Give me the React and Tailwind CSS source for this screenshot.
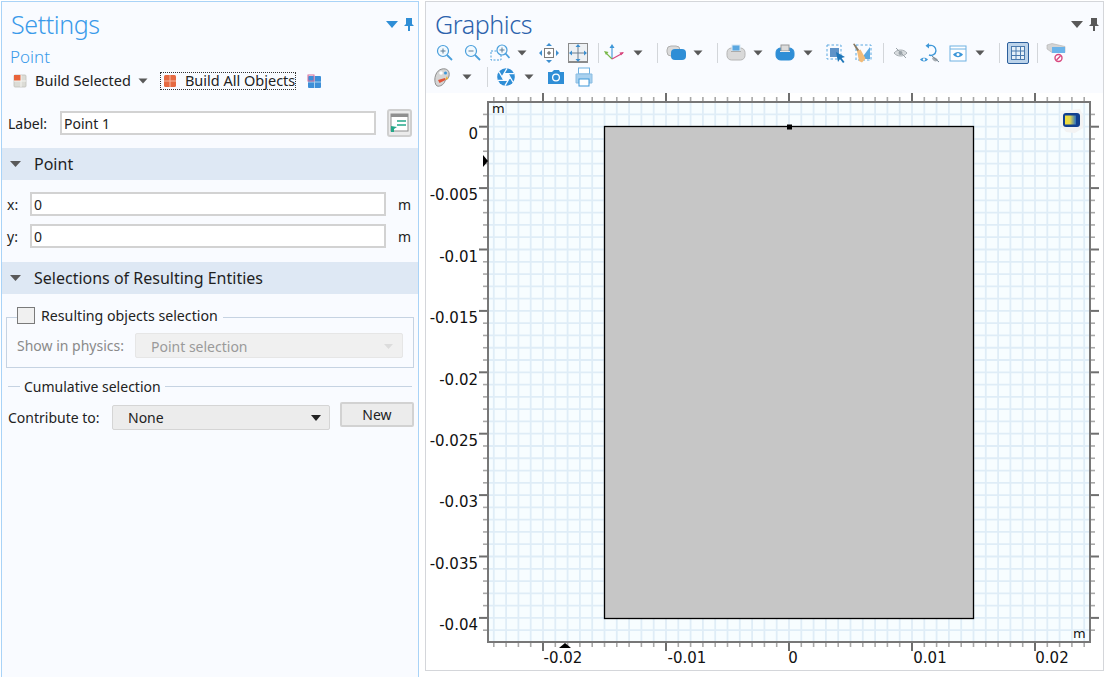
import React from 'react';

const major = 123;
const minor = 12.3;
const yMinor = 12.28;

function Caret({ className = '' }) {
  return (
    <svg width="12" height="8" viewBox="0 0 12 8" className={`shrink-0 ${className}`}>
      <path d="M1.500 1.500h9L6 6.500z" fill="#595959" />
    </svg>
  );
}

function Sep({ className = '' }) {
  return <div className={`w-px h-[20px] bg-[#d3d6da] shrink-0 ${className}`} />;
}

function Ico({ children, className = '' }) {
  return (
    <svg width="20" height="20" viewBox="0 0 20 20" fill="none" className={`shrink-0 ${className}`}>
      {children}
    </svg>
  );
}

function ZoomIcon({ plus = false }) {
  return (
    <>
      <circle cx="8" cy="8" r="5.5" stroke="#4a9fdc" strokeWidth="1.2" fill="#f2f9fe" />
      <path d="M12 12l5 5" stroke="#4a9fdc" strokeWidth="1.800" />
      <path d="M5.5 8h5" stroke="#5c7b93" />
      {plus && <path d="M8 5.5v5" stroke="#5c7b93" />}
    </>
  );
}

function BlockIcon({ blue = false }) {
  return (
    <>
      <rect x="1" y="5" width="18" height="12" rx="4.5" fill={blue ? '#2f8ed6' : '#d9d9d9'} stroke={blue ? '#2f8ed6' : '#b5b5b5'} />
      <rect x="6" y="2" width="8" height="6" fill={blue ? '#dcdcdc' : '#5aa7e0'} stroke={blue ? '#9a9a9a' : '#d8e8f4'} />
      <path d="M5 8.5h10" stroke={blue ? '#e9e9e9' : '#ababab'} />
    </>
  );
}

function Toolbar() {
  return (
    <div className="flex flex-col">
      <div className="flex items-center h-[24px] pl-[9px]">
        <Ico><ZoomIcon plus /></Ico>
        <Ico className="ml-[8px]"><ZoomIcon /></Ico>
        <Ico className="ml-[7px]">
          <rect x="1" y="8" width="10" height="9" stroke="#4a9fdc" strokeDasharray="2 1.5" />
          <circle cx="12" cy="7" r="5" stroke="#4a9fdc" strokeWidth="1.2" fill="#f2f9fe" />
          <path d="M15.5 10.5l4 4.5" stroke="#4a9fdc" strokeWidth="1.800" />
          <path d="M9.500 7h5M12 4.500v5" stroke="#5c7b93" />
        </Ico>
        <Caret className="ml-[6px]" />
        <Ico className="ml-[11px]">
          <rect x="5.5" y="5.5" width="9" height="9" fill="#fff" stroke="#7b7b7b" />
          <path d="M8 10h4M10 8v4" stroke="#555" />
          <path d="M10 0l3 3H7zM10 20l3-3H7zM0 10l3-3v6zM20 10l-3-3v6z" fill="#3d8fd0" />
        </Ico>
        <div className="ml-[9px] w-[20px] h-[20px] border border-[#8b8b8b] border-b-2 bg-[#eef1f4] flex items-center justify-center shrink-0">
          <svg width="18" height="18" viewBox="0 0 18 18" fill="none">
            <path d="M9 2v14M2 9h14" stroke="#6d7f8e" />
            <path d="M9 0l2.500 3h-5zM9 18l2.500-3h-5zM0 9l3-2.500v5zM18 9l-3-2.500v5z" fill="#3d8fd0" />
          </svg>
        </div>
        <Sep className="ml-[10px]" />
        <Ico className="ml-[5px]">
          <path d="M8 16V3" stroke="#3d97d8" strokeWidth="1.1" />
          <path d="M8 1l2.500 4h-5z" fill="#3d97d8" />
          <path d="M8 16L2 10" stroke="#79b84a" strokeWidth="1.1" />
          <path d="M0 8l4.500 1-2.500 3z" fill="#79b84a" />
          <path d="M8 16l11-6" stroke="#d8487f" strokeWidth="1.1" />
          <path d="M20 9l-4.500.5 1.500 3z" fill="#d8487f" />
        </Ico>
        <Caret className="ml-[8px]" />
        <Sep className="ml-[13px]" />
        <Ico className="ml-[8px]">
          <rect x="1" y="3" width="13" height="10" rx="4" fill="#dadada" stroke="#b0b0b0" />
          <rect x="5" y="6" width="15" height="11" rx="4" fill="#2f8ed6" />
        </Ico>
        <Caret className="ml-[6px]" />
        <Sep className="ml-[13px]" />
        <Ico className="ml-[8px]"><BlockIcon /></Ico>
        <Caret className="ml-[6px]" />
        <Ico className="ml-[11px]"><BlockIcon blue /></Ico>
        <Caret className="ml-[7px]" />
        <Ico className="ml-[12px]">
          <rect x="1" y="2" width="14" height="14" stroke="#5aa7e0" strokeDasharray="2.500 2" />
          <rect x="4" y="5" width="9" height="9" fill="#5f93c8" />
          <path d="M10 9l9 5-3.500 1 3 4-1.500 1-3-4-2 3z" fill="#1f76b8" />
        </Ico>
        <Ico className="ml-[6px]">
          <rect x="4" y="2" width="15" height="15" stroke="#5aa7e0" strokeDasharray="2.500 2" />
          <path d="M18 4v12H9z" fill="#5aa7e0" />
          <path d="M1 1l1.500-.5 5 7-2 1z" fill="#8a7a62" />
          <path d="M5 8l3.500-1.500 5 9-3.500 4-3-1.500z" fill="#f2bb78" />
        </Ico>
        <Sep className="ml-[11px]" />
        <Ico className="ml-[7px]">
          <path d="M3 10c3-4 10-4 13 0-3 4-10 4-13 0z" fill="#d7dbde" stroke="#a8aeb3" />
          <circle cx="9.500" cy="10" r="2" fill="#9aa2a8" />
          <path d="M5 5l10 10" stroke="#9aa2a8" />
        </Ico>
        <Ico className="ml-[9px]">
          <path d="M8 2.500h2a5 5 0 1 1-1 9.500" stroke="#3d97d8" strokeWidth="1.400" />
          <path d="M9 0v5.500L5.500 2.800z" fill="#3d97d8" />
          <path d="M0 16.500c2-2.500 6-2.500 8 0-2 2.500-6 2.500-8 0z" fill="#3d97d8" />
          <circle cx="4" cy="16.500" r="1.200" fill="#fff" />
          <path d="M12 15c1.500-1.500 4-1 6 2l-2 1.500c-2 0-3.500-1.500-4-3.500z" fill="#a8aeb3" />
          <path d="M12 13l7 6" stroke="#6f8291" />
        </Ico>
        <Ico className="ml-[8px]">
          <rect x="2" y="3" width="16" height="15" fill="#fff" stroke="#6fb1e2" />
          <path d="M2 6h16" stroke="#6fb1e2" />
          <path d="M5 11.500c3-3.500 7-3.500 10 0-3 3.500-7 3.500-10 0z" fill="#3d97d8" />
          <circle cx="10" cy="11.500" r="1.500" fill="#fff" />
        </Ico>
        <Caret className="ml-[6px]" />
        <Sep className="ml-[13px]" />
        <div className="ml-[7px] w-[22px] h-[22px] rounded-[2px] border border-[#2c5f9c] bg-[#bcd3ea] flex items-center justify-center shrink-0">
          <svg width="14" height="14" viewBox="0 0 14 14" fill="none">
            <rect x="0.500" y="0.500" width="13" height="13" fill="#e6f0f8" stroke="#4b7aae" />
            <path d="M5 0v14M9.500 0v14M0 5h14M0 9.500h14" stroke="#4b7aae" />
          </svg>
        </div>
        <Sep className="ml-[8px]" />
        <Ico className="ml-[8px]">
          <path d="M1 2l5-1.500 13 3v6H6L1 6z" fill="#d4d4d4" stroke="#b0b0b0" strokeWidth="0.6" />
          <rect x="6" y="4" width="13" height="6" fill="#6cb4ea" />
          <circle cx="12.500" cy="15" r="3.500" fill="#fff" stroke="#d8487f" strokeWidth="1.400" />
          <path d="M10.500 17l4-4" stroke="#d8487f" strokeWidth="1.400" />
        </Ico>
      </div>
      <div className="flex items-center h-[24px] pl-[7px]">
        <Ico>
          <path d="M3 18C0 12 3 3 9 2c5-1 8 2 7 7-1 4-3 3-4 5-1 4-7 7-9 4z" fill="#d5d5d5" stroke="#8f8f8f" />
          <circle cx="8" cy="6" r="1.800" fill="#fff" />
          <circle cx="12.500" cy="6" r="1.500" fill="#3d97d8" />
          <path d="M14 9l1 3-3 1z" fill="#f0b02e" />
          <path d="M5 13l7-2 .500 2-6 3z" fill="#e2553a" />
        </Ico>
        <Caret className="ml-[8px]" />
        <Sep className="ml-[14px]" />
        <Ico className="ml-[8px]">
          <circle cx="10" cy="10" r="8.800" fill="#2f8ed6" />
          <path d="M12 6.540L14 10l3 5.200M14 10l-2 3.460L9 18.660M12 13.460H8l-6 0M8 13.460L6 10 3 4.800M6 10l2-3.460L11 1.340M8 6.540h4l6 0" stroke="#f9fbff" strokeWidth="1.300" />
          <path d="M14 10l-2 3.460H8L6 10l2-3.460h4z" fill="#f9fbff" />
        </Ico>
        <Caret className="ml-[7px]" />
        <Ico className="ml-[11px]">
          <path d="M2 5h4l2-2h5l1 2h4v12H2z" fill="#2f8ed6" />
          <circle cx="10" cy="10.500" r="4" fill="#fff" />
          <circle cx="10" cy="10.500" r="2.700" fill="#2f8ed6" />
        </Ico>
        <Ico className="ml-[8px]">
          <rect x="4.500" y="1" width="11" height="6" fill="#fff" stroke="#6fb1e2" />
          <path d="M2 7h16v9H2z" fill="#a9d1ef" stroke="#8bbde2" />
          <rect x="5" y="12" width="10" height="7" fill="#fff" stroke="#3d97d8" />
        </Ico>
      </div>
    </div>
  );
}

function Plot() {
  const xs = [];
  const ys = [];
  for (let i = -4; i <= 44; i++) xs.push(543 + i * minor);
  for (let i = -2; i <= 42; i++) ys.push(126.7 + i * yMinor);
  const gridX = xs.filter((x) => x > 489 && x < 1090);
  const gridY = ys.filter((y) => y > 103 && y < 642);
  const yLabels = ['0', '-0.005', '-0.01', '-0.015', '-0.02', '-0.025', '-0.03', '-0.035', '-0.04'];
  const xLabels = [['-0.02', 563], ['-0.01', 687], ['0', 793], ['0.01', 930], ['0.02', 1052]];
  const isMajorX = (x) => Math.abs((x - 543) / major - Math.round((x - 543) / major)) < 0.01;
  const isMajorY = (y) => Math.abs((y - 126.7) / (yMinor * 5) - Math.round((y - 126.7) / (yMinor * 5))) < 0.01;

  return (
    <svg width="677" height="577" viewBox="426 93 677 577" className="block bg-white">
      <rect x="488" y="102" width="602" height="540" fill="#f7fdff" />
      {gridX.map((x) => (
        <line key={x} x1={x} x2={x} y1="103" y2="641" stroke="#dfedf7" strokeWidth="1.800" />
      ))}
      {gridY.map((y) => (
        <line key={y} x1="489" x2="1089" y1={y} y2={y} stroke="#dfedf7" strokeWidth="1.800" />
      ))}
      {gridX.map((x) => {
        const m = isMajorX(x);
        return (
          <g key={x} stroke={m ? '#6f6f6f' : '#a8a8a8'} strokeWidth={m ? 2 : 1.600}>
            <line x1={x} x2={x} y1={m ? 93 : 97} y2="102" />
            <line x1={x} x2={x} y1="642" y2={m ? 651 : 647} />
          </g>
        );
      })}
      {gridY.map((y) => {
        const m = isMajorY(y);
        return (
          <g key={y} stroke={m ? '#6f6f6f' : '#a8a8a8'} strokeWidth={m ? 2 : 1.600}>
            <line x1={m ? 479 : 483} x2="488" y1={y} y2={y} />
            <line x1="1090" x2={m ? 1099 : 1095} y1={y} y2={y} />
          </g>
        );
      })}
      <rect x="488" y="102" width="602" height="540" fill="none" stroke="#777" strokeWidth="2" />
      <rect x="604.500" y="126.500" width="369" height="492" fill="#c6c6c6" stroke="#000" strokeWidth="1.300" />
      <rect x="787" y="124.500" width="5" height="5" fill="#000" />
      <path d="M483 155l5 6-5 6z" fill="#000" />
      <path d="M559 648l6-5 6 5z" fill="#000" />
      <g fontFamily="'DejaVu Sans', sans-serif" fontSize="15" fill="#111">
        {yLabels.map((t, i) => (
          <text key={t} x="478" y={126.7 + i * 61.4 + 12.300} textAnchor="end">{t}</text>
        ))}
        {xLabels.map(([t, x]) => (
          <text key={t} x={x} y="663" textAnchor="middle">{t}</text>
        ))}
        <text x="492" y="113" fontSize="13">m</text>
        <text x="1073" y="638" fontSize="13">m</text>
      </g>
      <defs>
        <linearGradient id="lens" x1="0" y1="0" x2="1" y2="0">
          <stop offset="0" stopColor="#f4dd3a" />
          <stop offset="0.450" stopColor="#e6d84a" />
          <stop offset="1" stopColor="#2a6fc0" />
        </linearGradient>
      </defs>
      <path d="M1060 111l20-2 3 6 0 13-8 5-9-1-6-8z" fill="#f3f3f3" />
      <rect x="1063" y="113" width="17" height="14" rx="3" fill="#123f8f" />
      <rect x="1065" y="115.500" width="11" height="9" fill="url(#lens)" />
    </svg>
  );
}

function SectionHeader({ title }) {
  return (
    <div className="h-[32px] bg-[#dee8f4] flex items-center">
      <svg width="13" height="7" viewBox="0 0 13 7" className="ml-[7px]">
        <path d="M1 0h11L6.500 6z" fill="#595959" />
      </svg>
      <span className="ml-[12px] text-[16px] text-[#1f1f1f]">{title}</span>
    </div>
  );
}

function Field({ label, value }) {
  return (
    <div className="flex items-center h-[24px]">
      <span className="w-[23px] ml-[5px] text-[14px]">{label}</span>
      <input
        readOnly
        value={value}
        className="w-[356px] h-[24px] bg-white border-2 border-[#d2d2d2] px-[2px] text-[14px] outline-none"
      />
      <span className="ml-[12px] text-[14px]">m</span>
    </div>
  );
}

export default function App() {
  return (
    <div className="w-[1109px] h-[677px] overflow-hidden bg-white flex items-start pl-px pt-px font-['Noto_Sans',sans-serif] text-[#222]">
      {/* Settings panel */}
      <div className="w-[418px] h-[676px] shrink-0 border-x border-t border-[#a9d3f7] bg-[#f9fbff] flex flex-col">
        <div className="flex items-start justify-between h-[44px] pl-[9px] pr-[4px]">
          <h1 className="text-[25px] leading-[44px] tracking-[-0.4px] font-light text-[#3a9aea]">Settings</h1>
          <div className="flex items-center gap-[6px] mt-[16px]">
            <svg width="12" height="7" viewBox="0 0 12 7"><path d="M0 0h12L6 7z" fill="#2f8ed6" /></svg>
            <svg width="10" height="13" viewBox="0 0 10 13"><path d="M2 0h6v6l2 2H6v5H4V8H0l2-2z" fill="#2f8ed6" /></svg>
          </div>
        </div>
        <div className="h-[22px] pl-[8px] text-[17px] leading-[22px] font-light text-[#3a9aea]">Point</div>
        <div className="flex items-center h-[24px] mt-[1px]">
          <svg width="14" height="14" viewBox="0 0 14 14" className="ml-[11px]">
            <rect x="1" y="1" width="12" height="12" rx="1" fill="#dcdcd6" stroke="#c0c0ba" strokeWidth="0.800" />
            <rect x="1" y="1" width="7" height="6" fill="#e8633a" />
            <path d="M8 1v12M1 7h12" stroke="#f4f4f0" />
          </svg>
          <span className="ml-[8px] text-[14.5px]">Build Selected</span>
          <Caret className="ml-[6px]" />
          <div className="ml-[11px] h-[18px] flex items-center border border-dotted border-[#333] pl-[2px]">
            <svg width="14" height="14" viewBox="0 0 14 14">
              <rect x="1" y="1" width="12" height="12" rx="1.500" fill="#e56a42" />
              <path d="M7 1v12M1 7h12" stroke="#f4b9a2" />
            </svg>
            <span className="ml-[8px] text-[14.5px]">Build All Objects</span>
          </div>
          <svg width="15" height="15" viewBox="0 0 15 15" className="ml-[11px]">
            <rect x="1" y="2" width="13" height="12" rx="1" fill="#3d8fd8" />
            <path d="M7.500 2v12M1 8h13" stroke="#a9d1ef" />
            <rect x="1" y="1" width="6" height="6" fill="none" stroke="#d86f9a" />
          </svg>
        </div>
        <div className="flex items-center h-[28px] mt-[16px]">
          <span className="ml-[6px] w-[52px] text-[14px]">Label:</span>
          <input
            readOnly
            value="Point 1"
            className="w-[316px] h-[24px] bg-white border-2 border-[#d2d2d2] px-[2px] text-[14px] outline-none"
          />
          <button className="ml-[11px] w-[25px] h-[28px] rounded-[3px] border-2 border-[#cfcfcf] bg-[#ebebeb] flex items-center justify-center">
            <svg width="19" height="20" viewBox="0 0 19 20" fill="none">
              <rect x="1" y="1" width="17" height="17" fill="#fff" stroke="#8f8f8f" />
              <path d="M1 1h17v3H1z" fill="#8f8f8f" />
              <path d="M7 8h9M7 12h9" stroke="#26a88a" strokeWidth="1.500" />
              <path d="M1 13l6 1-3 2 0 3H1z" fill="#26a88a" />
            </svg>
          </button>
        </div>
        <div className="mt-[11px]"><SectionHeader title="Point" /></div>
        <div className="mt-[12px] flex flex-col gap-[8px]">
          <Field label="x:" value="0" />
          <Field label="y:" value="0" />
        </div>
        <div className="mt-[14px]"><SectionHeader title="Selections of Resulting Entities" /></div>
        <fieldset className="mt-[13px] ml-[4px] mr-[5px] border border-[#c6d3e2] h-[61px] px-[10px]">
          <legend className="flex items-start ml-[0px] pr-[5px] pb-[3px]">
            <span className="w-[18px] h-[17px] border border-[#7a7a7a] bg-[#f0f0f0]" />
            <span className="ml-[6px] text-[14.200px] leading-[17px]">Resulting objects selection</span>
          </legend>
          <div className="flex items-center mt-[6px]">
            <span className="w-[118px] text-[14px] text-[#8a8a8a]">Show in physics:</span>
            <div className="w-[268px] h-[25px] rounded-[2px] border border-[#e6e6e6] bg-[#f0f0f0] flex items-center justify-between pl-[15px] pr-[9px] pt-px">
              <span className="text-[14px] text-[#9a9a9a]">Point selection</span>
              <svg width="9" height="5" viewBox="0 0 9 5"><path d="M0 0h9L4.500 5z" fill="#dcdcdc" /></svg>
            </div>
          </div>
        </fieldset>
        <div className="flex items-center mt-[8px] ml-[6px] mr-[6px]">
          <div className="w-[12px] h-px bg-[#c6d3e2]" />
          <span className="mx-[4px] text-[14px]">Cumulative selection</span>
          <div className="grow h-px bg-[#c6d3e2]" />
        </div>
        <div className="flex items-start mt-[5px]">
          <span className="ml-[6px] w-[104px] mt-[5px] text-[14px]">Contribute to:</span>
          <div className="mt-[3px] w-[218px] h-[25px] rounded-[2px] border border-[#d5d5d5] bg-[#ececec] flex items-center justify-between pl-[15px] pr-[8px]">
            <span className="text-[14px]">None</span>
            <svg width="10" height="6" viewBox="0 0 10 6"><path d="M0 0h10L5 6z" fill="#222" /></svg>
          </div>
          <button className="ml-[10px] w-[74px] h-[25px] rounded-[2px] border-2 border-[#d2d2d2] bg-[#ececec] text-[14px]">New</button>
        </div>
      </div>

      {/* Graphics panel */}
      <div className="ml-[6px] w-[679px] h-[670px] shrink-0 border border-[#d4d6da] bg-[#f9fbff] flex flex-col">
        <div className="flex items-start justify-between h-[39px] pl-[9px] pr-[4px]">
          <h1 className="text-[25px] leading-[44px] tracking-[-0.4px] font-light text-[#2b62ac]">Graphics</h1>
          <div className="flex items-center gap-[6px] mt-[16px]">
            <svg width="12" height="7" viewBox="0 0 12 7"><path d="M0 0h12L6 7z" fill="#595959" /></svg>
            <svg width="10" height="13" viewBox="0 0 10 13"><path d="M2 0h6v6l2 2H6v5H4V8H0l2-2z" fill="#595959" /></svg>
          </div>
        </div>
        <Toolbar />
        <div className="grow mt-[4px]"><Plot /></div>
      </div>
    </div>
  );
}
